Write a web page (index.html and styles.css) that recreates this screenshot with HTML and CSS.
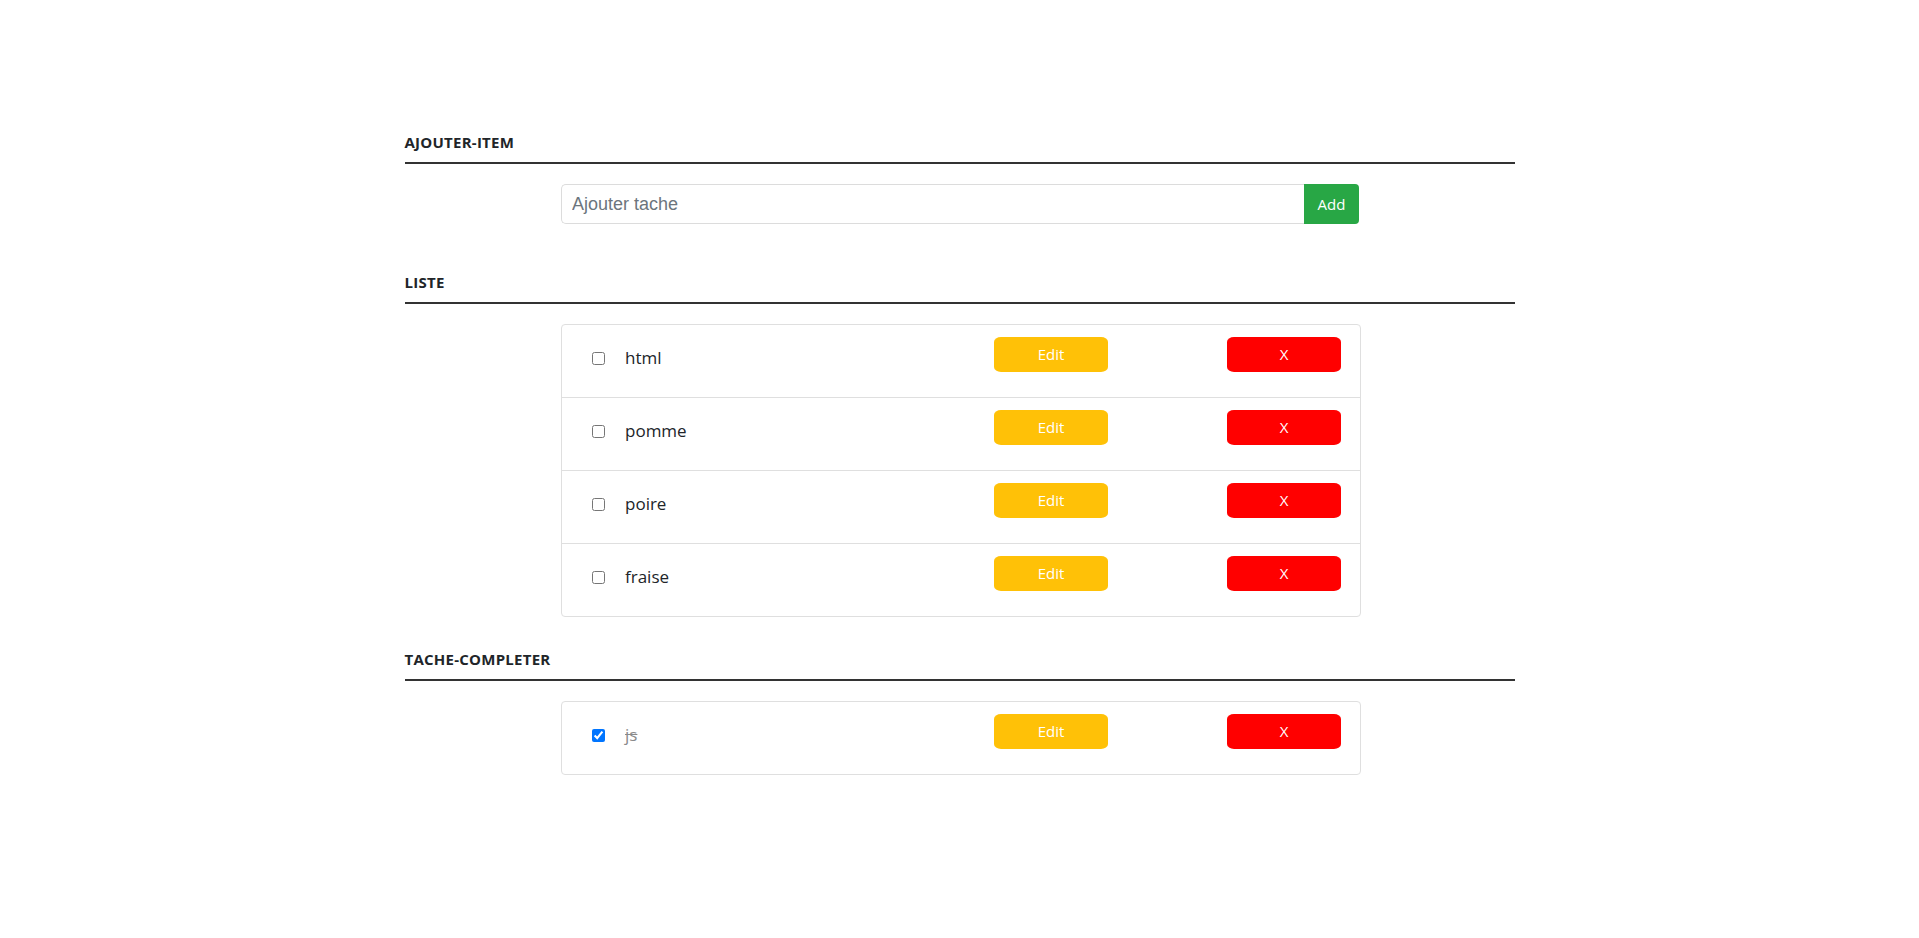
FILE: index.html
```html
<!DOCTYPE html>
<html lang="fr">
<head>
<meta charset="utf-8">
<title>Todo</title>
<link rel="stylesheet" href="styles.css">
</head>
<body>
<div class="container">
  <section class="section first">
    <h2 class="heading">AJOUTER-ITEM</h2>
    <div class="input-group">
      <input class="task-input" type="text" placeholder="Ajouter tache">
      <button class="btn-add" type="button">Add</button>
    </div>
  </section>

  <section class="section">
    <h2 class="heading">LISTE</h2>
    <ul class="card">
      <li class="row">
        <label class="item"><input type="checkbox"><span class="label">html</span></label>
        <button class="btn btn-edit" type="button">Edit</button>
        <button class="btn btn-del" type="button">X</button>
      </li>
      <li class="row">
        <label class="item"><input type="checkbox"><span class="label">pomme</span></label>
        <button class="btn btn-edit" type="button">Edit</button>
        <button class="btn btn-del" type="button">X</button>
      </li>
      <li class="row">
        <label class="item"><input type="checkbox"><span class="label">poire</span></label>
        <button class="btn btn-edit" type="button">Edit</button>
        <button class="btn btn-del" type="button">X</button>
      </li>
      <li class="row">
        <label class="item"><input type="checkbox"><span class="label">fraise</span></label>
        <button class="btn btn-edit" type="button">Edit</button>
        <button class="btn btn-del" type="button">X</button>
      </li>
    </ul>
  </section>

  <section class="section">
    <h2 class="heading">TACHE-COMPLETER</h2>
    <ul class="card">
      <li class="row">
        <label class="item"><input type="checkbox" checked><span class="label done">js</span></label>
        <button class="btn btn-edit" type="button">Edit</button>
        <button class="btn btn-del" type="button">X</button>
      </li>
    </ul>
  </section>
</div>
</body>
</html>
```

FILE: styles.css
```css
html, body {
  margin: 0;
  padding: 0;
  background: #ffffff;
}

body {
  font-family: "Open Sans", "Noto Sans", "DejaVu Sans", sans-serif;
  color: #212529;
}

.container {
  width: 1110px;
  margin: 0 auto;
  padding-top: 133px;
}

.section {
  margin-top: 33px;
}

.section.first {
  margin-top: 0;
  padding-bottom: 16px;
}

.heading {
  margin: 0 0 20px 0;
  font-size: 15px;
  font-weight: 700;
  line-height: 18px;
  letter-spacing: 0.25px;
  padding-bottom: 11px;
  border-bottom: 2px solid #333333;
  color: #212529;
}

.input-group {
  display: flex;
  width: 798px;
  height: 40px;
  margin: 0 0 0 156.5px;
}

.task-input {
  flex: 1;
  box-sizing: border-box;
  height: 40px;
  margin: 0;
  padding: 0 10px;
  border: 1px solid #dcdcdc;
  border-right: none;
  border-radius: 5px 0 0 5px;
  font-family: "Liberation Sans", Arial, sans-serif;
  font-size: 18px;
  color: #495057;
  outline: none;
}

.task-input::placeholder {
  color: #6c757d;
}

.btn-add {
  width: 55px;
  height: 40px;
  margin: 0;
  border: none;
  border-radius: 0 4px 4px 0;
  background: #28a745;
  color: #ffffff;
  font-family: "Open Sans", sans-serif;
  font-size: 15px;
  padding: 0;
}

.card {
  list-style: none;
  width: 800px;
  box-sizing: border-box;
  margin: 0 0 0 156.5px;
  padding: 0;
  border: 1px solid #dfdfdf;
  border-radius: 4px;
}

.row {
  display: flex;
  align-items: flex-start;
  height: 72px;
  border-bottom: 1px solid #dfdfdf;
}

.row:last-child {
  border-bottom: none;
}

.item {
  flex: 1;
  display: flex;
  align-items: center;
  margin-top: 21px;
  padding-left: 30px;
  height: 24px;
}

.item input {
  width: 13px;
  height: 13px;
  margin: 1px 20px 0 0;
}

.label {
  font-size: 17px;
  line-height: 24px;
  color: #212529;
}

.label.done {
  color: #8a8a8a;
  text-decoration: line-through;
}

.btn {
  width: 114px;
  height: 35px;
  margin-top: 12px;
  padding: 0;
  border: none;
  border-radius: 7px / 5px;
  color: #ffffff;
  font-family: "Open Sans", sans-serif;
  font-size: 15px;
  line-height: 35px;
}

.btn-edit {
  background: #ffc107;
  margin-right: 119px;
}

.btn-del {
  background: #ff0000;
  margin-right: 19px;
}
```
